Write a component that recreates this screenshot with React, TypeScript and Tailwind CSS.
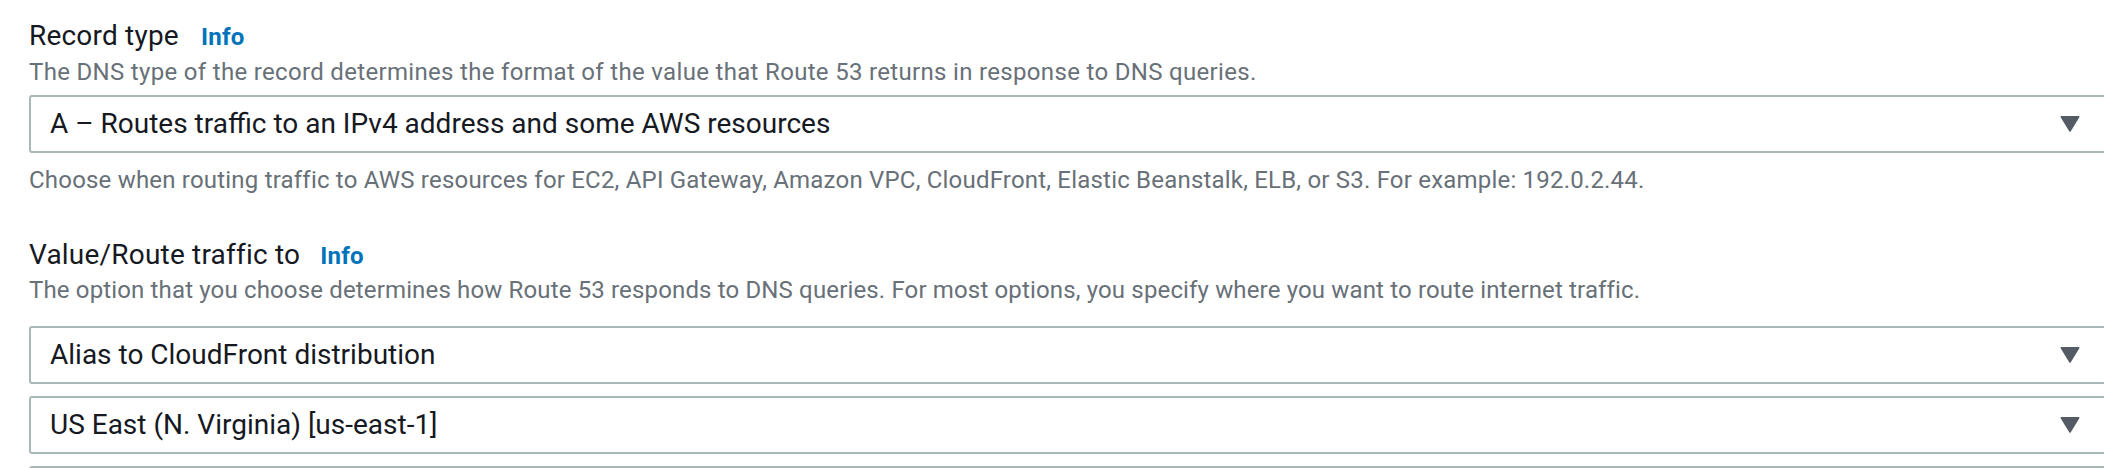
import { ReactNode } from 'react';

const font = { fontFamily: 'Roboto, "Noto Sans", sans-serif' };

const Caret = () => (
    <svg width="20" height="16" viewBox="0 0 20 16" className="shrink-0">
        <path d="M1.5 0 H18.5 Q20 0 19.2 1.4 L10.8 15.2 Q10 16.4 9.2 15.2 L0.8 1.4 Q0 0 1.5 0 Z" fill="#545b64" />
    </svg>
);

const Select = ({ value, className = '' }: { value: string; className?: string }) => (
    <div
        className={`flex items-center justify-between w-[2085px] h-[58px] border-2 border-[#aab7b8] rounded-[3px] bg-white pl-[19px] pr-[32px] ${className}`}
    >
        <span className="text-[28px] leading-[36px] text-[#16191f]">{value}</span>
        <Caret />
    </div>
);

const Label = ({ children, gap }: { children: ReactNode; gap: string }) => (
    <div className={`flex items-baseline ${gap} text-[28px] leading-[36px] tracking-[0.2px] text-[#16191f]`}>
        <span>{children}</span>
        <a className="text-[24px] font-bold tracking-[0.3px] text-[#0073bb] cursor-pointer">Info</a>
    </div>
);

const Hint = ({ children, className = '' }: { children: ReactNode; className?: string }) => (
    <p className={`text-[24px] leading-[32px] text-[#687078] ${className}`}>{children}</p>
);

export default function App() {
    return (
        <div className="w-[2104px] h-[468px] overflow-hidden bg-white pl-[29px] pt-[18px]" style={font}>
            {/* Record type */}
            <Label gap="gap-[22px]">Record type</Label>
            <Hint className="mt-[1px] tracking-[0.32px]">
                The DNS type of the record determines the format of the value that Route 53 returns in response to DNS queries.
            </Hint>
            <Select value="A – Routes traffic to an IPv4 address and some AWS resources" className="mt-[7px]" />
            <Hint className="mt-[11px] tracking-[0.2px]">
                Choose when routing traffic to AWS resources for EC2, API Gateway, Amazon VPC, CloudFront, Elastic Beanstalk, ELB, or S3. For example: 192.0.2.44.
            </Hint>

            {/* Value / route target */}
            <div className="mt-[41px]">
                <Label gap="gap-[20px]">Value/Route traffic to</Label>
                <Hint className="tracking-[0.15px]">
                    The option that you choose determines how Route 53 responds to DNS queries. For most options, you specify where you want to route internet traffic.
                </Hint>
            </div>
            <div className="flex flex-col gap-[12px] mt-[20px]">
                <Select value="Alias to CloudFront distribution" />
                <Select value="US East (N. Virginia) [us-east-1]" />
                <Select value="" />
            </div>
        </div>
    );
}
